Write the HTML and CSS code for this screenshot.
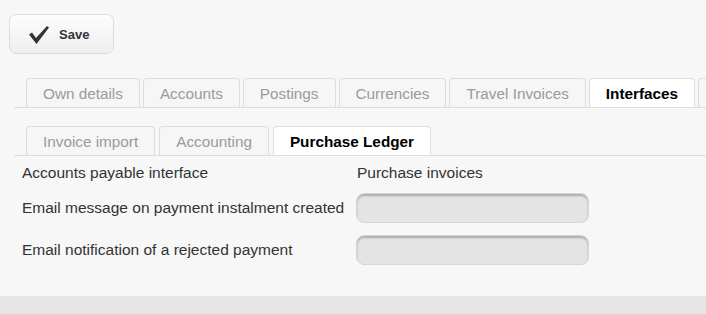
FILE: index.html
```html
<!DOCTYPE html>
<html lang="en">

<head>
    <meta charset="UTF-8">
    <title>Settings</title>
    <link rel="stylesheet" href="styles.css">
</head>

<body>

    <div id="page">
        <div id="toolbar">
            <button class="tool-btn">
                <svg width="22" height="20" viewBox="0 0 22 20">
                    <path d="M1 9.5 L4 7.5 L8 13 L19 1 L21 2.5 L8.5 19 Z" fill="#333" />
                </svg>
                <span>Save</span>
            </button>
        </div>

        <div class="tabs tabs-main">
            <div class="tab">Own details</div>
            <div class="tab">Accounts</div>
            <div class="tab">Postings</div>
            <div class="tab">Currencies</div>
            <div class="tab">Travel Invoices</div>
            <div class="tab active">Interfaces</div>
            <div class="tab tab-stub"></div>
        </div>

        <div class="tabs tabs-sub">
            <div class="tab">Invoice import</div>
            <div class="tab">Accounting</div>
            <div class="tab active">Purchase Ledger</div>
        </div>

        <div id="form">
            <div class="form-row">
                <label>Accounts payable interface</label>
                <div class="value">Purchase invoices</div>
            </div>
            <div class="form-row">
                <label>Email message on payment instalment created</label>
                <input type="text" class="field" />
            </div>
            <div class="form-row">
                <label>Email notification of a rejected payment</label>
                <input type="text" class="field" />
            </div>
        </div>
    </div>

    <div id="footer"></div>

</body>

</html>
```

FILE: styles.css
```css
body {
    margin: 0;
    font-family: 'Liberation Sans', Arial, sans-serif;
    background: #f7f7f7;
    color: #333;
}

#page {
    height: 296px;
    overflow: hidden;
}

#toolbar {
    padding: 14px 0 0 9px;
    height: 40px;
}

.tool-btn {
    display: flex;
    align-items: center;
    gap: 9px;
    width: 105px;
    height: 40px;
    padding: 0 0 0 18px;
    border: 1px solid #dcdcdc;
    border-radius: 7px;
    background: linear-gradient(#fdfdfd, #eeeeee);
    font-family: 'Liberation Sans', Arial, sans-serif;
    font-size: 13px;
    font-weight: bold;
    color: #333;
    cursor: pointer;
}

.tool-btn svg {
    margin-top: 1px;
}

.tabs {
    display: flex;
    gap: 3px;
    margin-left: 14px;
    padding-left: 12px;
    border-bottom: 1px solid #dddddd;
    white-space: nowrap;
    overflow: hidden;
}

.tabs-main {
    margin-top: 24px;
}

.tabs-sub {
    margin-top: 18px;
    gap: 4px;
}

.tab {
    height: 28px;
    line-height: 29px;
    padding: 0 16px;
    border: 1px solid #dddddd;
    border-bottom: none;
    border-radius: 4px 4px 0 0;
    background: #f6f6f6;
    color: #9a9a9a;
    font-size: 15.3px;
    flex-shrink: 0;
}

.tab.active {
    background: #fff;
    color: #000;
    font-weight: bold;
}

.tab-stub {
    width: 60px;
}

#form {
    padding: 8px 0 0 22px;
}

.form-row {
    display: grid;
    grid-template-columns: 334px 233px;
    align-items: center;
    margin-bottom: 12px;
    font-size: 15.5px;
    color: #333;
}

.form-row:first-child {
    margin-bottom: 11px;
}

.value {
    padding-left: 1px;
}

.field {
    width: 233px;
    height: 30px;
    box-sizing: border-box;
    border: 1px solid #d6d6d6;
    border-radius: 8px;
    background: #e4e4e4;
    box-shadow: inset 0 2px 2px rgba(0, 0, 0, 0.25);
}

#footer {
    height: 18px;
    background: #e5e5e5;
}
```
